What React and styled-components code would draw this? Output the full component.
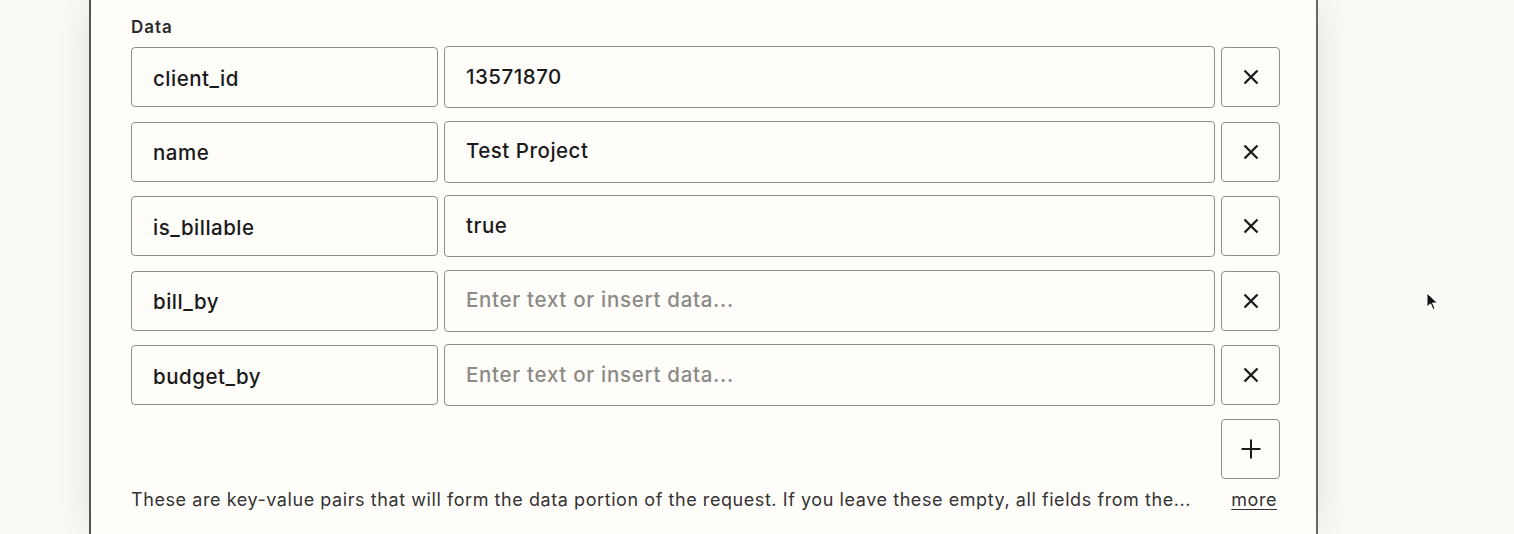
import React from 'react';
import styled, { createGlobalStyle } from 'styled-components';

const GlobalStyle = createGlobalStyle`
  html, body {
    margin: 0;
    padding: 0;
    background: #fbfaf6;
    font-family: 'Inter', 'Noto Sans', sans-serif;
    -webkit-font-smoothing: antialiased;
  }
`;

const Page = styled.div`
  position: relative;
  height: 534px;
  overflow: hidden;
  padding-left: 89px;
`;

const Panel = styled.section`
  box-sizing: border-box;
  width: 1229px;
  height: 534px;
  background: #fffdf9;
  border-left: 2px solid #555;
  border-right: 2px solid #666;
  box-shadow: 0 0 40px rgba(0, 0, 0, 0.11);
  padding: 15px 36px 0 40px;
`;

const Label = styled.div`
  font-size: 17px;
  font-weight: 600;
  letter-spacing: 1px;
  color: #2b2b2b;
  line-height: 24px;
  margin-bottom: 7px;
`;

const Rows = styled.div`
  display: flex;
  flex-direction: column;
  gap: 12.5px;
`;

const Row = styled.div`
  display: grid;
  grid-template-columns: 307px 771px 59px;
  column-gap: 6px;
  align-items: center;
`;

const Field = styled.div`
  box-sizing: border-box;
  height: ${p => (p.$tall ? '62px' : '60px')};
  border: 1px solid #8f8f8f;
  border-radius: 4px;
  background: #fffdf9;
  display: flex;
  align-items: center;
  padding: 0 21px;
  padding-top: ${p => (p.$tall ? '0' : '2px')};
  padding-bottom: ${p => (p.$tall ? '2px' : '0')};
  font-size: 20.5px;
  font-weight: 500;
  letter-spacing: ${p => (p.$placeholder ? '0.7px' : '0.5px')};
  color: ${p => (p.$placeholder ? '#8b8a86' : '#1a1a1a')};
  white-space: nowrap;
`;

const IconButton = styled.button`
  box-sizing: border-box;
  width: 59px;
  height: 60px;
  border: 1px solid #8f8f8f;
  border-radius: 4px;
  background: #fffdf9;
  display: flex;
  align-items: center;
  justify-content: center;
  padding: 0;
  color: #1a1a1a;
  grid-column: 3;
`;

const Footer = styled.div`
  display: flex;
  justify-content: space-between;
  align-items: baseline;
  margin-top: 9px;
  padding-right: 3px;
`;

const Help = styled.p`
  margin: 0;
  font-size: 18px;
  line-height: 24px;
  letter-spacing: 0.57px;
  color: #333;
`;

const More = styled.a`
  font-size: 18px;
  line-height: 24px;
  letter-spacing: 0.55px;
  color: #333;
  text-decoration: underline;
  text-underline-offset: 3px;
`;

const Cursor = styled.svg`
  position: absolute;
  left: 1426px;
  top: 292px;
`;

const Close = () => (
  <svg width="18" height="18" viewBox="0 0 18 18" fill="none">
    <path d="M2.5 2.5L15.5 15.5M15.5 2.5L2.5 15.5" stroke="currentColor" strokeWidth="2.3" />
  </svg>
);

const Plus = () => (
  <svg width="22" height="22" viewBox="0 0 22 22" fill="none">
    <path d="M11 1.5V20.5M1.5 11H20.5" stroke="currentColor" strokeWidth="2" />
  </svg>
);

const rows = [
  { key: 'client_id', value: '13571870' },
  { key: 'name', value: 'Test Project' },
  { key: 'is_billable', value: 'true' },
  { key: 'bill_by', value: '' },
  { key: 'budget_by', value: '' },
];

export default function App() {
  return (
    <>
      <GlobalStyle />
      <Page>
        <Panel>
          <Label>Data</Label>
          <Rows>
            {rows.map(r => (
              <Row key={r.key}>
                <Field>{r.key}</Field>
                <Field $tall $placeholder={!r.value}>
                  {r.value || 'Enter text or insert data...'}
                </Field>
                <IconButton title="Remove">
                  <Close />
                </IconButton>
              </Row>
            ))}
            <Row>
              <IconButton title="Add">
                <Plus />
              </IconButton>
            </Row>
          </Rows>
          <Footer>
            <Help>
              These are key-value pairs that will form the data portion of the request. If you leave these empty, all fields from the...
            </Help>
            <More>more</More>
          </Footer>
        </Panel>
        <Cursor width="14" height="20" viewBox="0 0 14 20">
          <path d="M1 1L1 15L4.5 11.8L7 17.5L9 16.6L6.6 11H11.5Z" fill="#111" stroke="#fff" strokeWidth="1" />
        </Cursor>
      </Page>
    </>
  );
}
